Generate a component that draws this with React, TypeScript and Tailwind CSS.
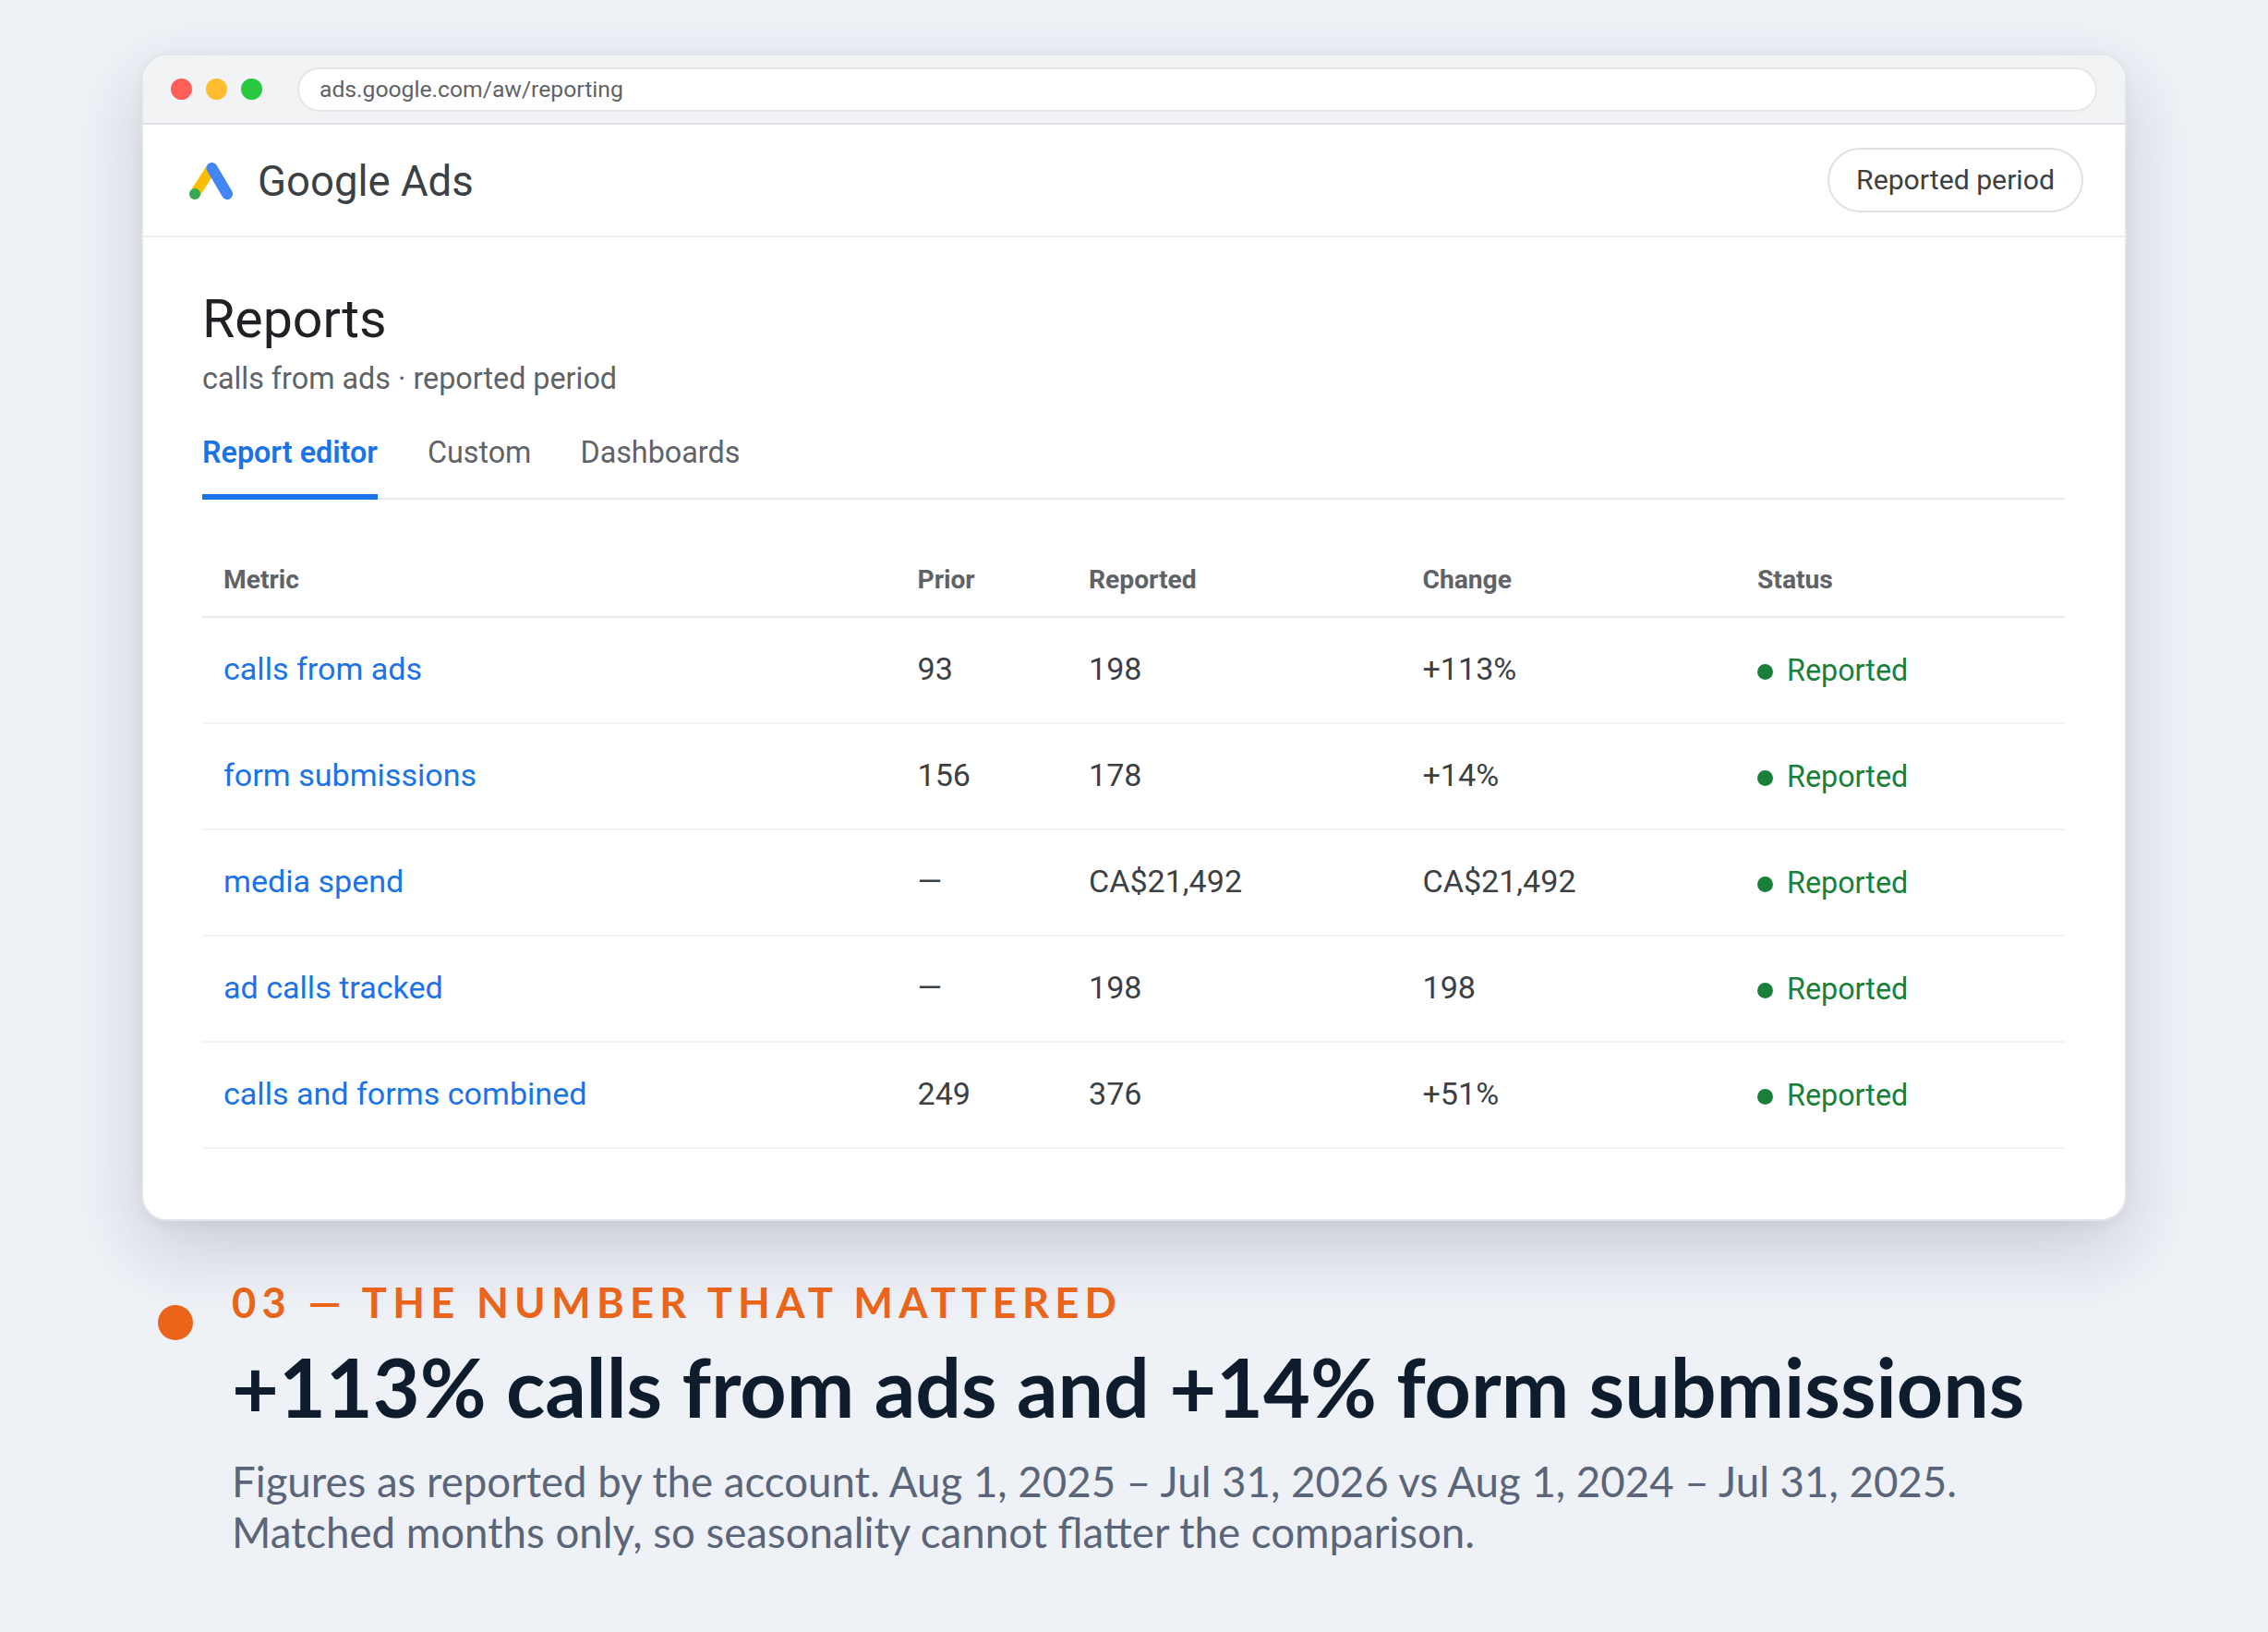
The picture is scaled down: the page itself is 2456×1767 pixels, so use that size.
import React from "react";

const rows = [
  ["calls from ads", "93", "198", "+113%"],
  ["form submissions", "156", "178", "+14%"],
  ["media spend", "—", "CA$21,492", "CA$21,492"],
  ["ad calls tracked", "—", "198", "198"],
  ["calls and forms combined", "249", "376", "+51%"],
];

const grid = "grid grid-cols-[751.5px_185.5px_361.5px_362.5px_357px]";

export default function App() {
  return (
    <div className="w-[2456px] h-[1767px] overflow-hidden bg-[#eef1f6] pt-[58px] pl-[153px] font-['Roboto',sans-serif]">
      <div className="w-[2150px] h-[1264px] rounded-[28px] bg-white overflow-hidden border-2 border-[#e2e5ea] shadow-[0_31px_78px_rgba(30,45,80,0.18),0_4px_14px_rgba(30,45,80,0.05)] flex flex-col">
        <div className="h-[75px] shrink-0 bg-[#f1f3f4] border-b-2 border-[#dfe1e5] flex items-center pl-[30px] pr-[30px]">
          <div className="flex gap-[15px]">
            <span className="w-[23px] h-[23px] rounded-full bg-[#ff5f57]" />
            <span className="w-[23px] h-[23px] rounded-full bg-[#febc2e]" />
            <span className="w-[23px] h-[23px] rounded-full bg-[#28c840]" />
          </div>
          <div className="ml-[38px] flex-1 h-[48px] rounded-full bg-white border-2 border-[#e4e6ea] flex items-center pl-[22px] text-[24.7px] text-[#5f6368]">
            ads.google.com/aw/reporting
          </div>
        </div>
        <div className="h-[122px] shrink-0 border-b-2 border-[#eceef1] flex items-center justify-between pl-[47px] pr-[45px]">
          <div className="flex items-center gap-[25px]">
            <svg width="52" height="44" viewBox="0 0 52 44" className="mt-[2px]">
              <line x1="9" y1="36" x2="27" y2="8" stroke="#fbbc04" strokeWidth="11.5" strokeLinecap="round" />
              <line x1="27.5" y1="8" x2="44" y2="36" stroke="#4285f4" strokeWidth="12" strokeLinecap="round" />
              <circle cx="9" cy="36" r="6" fill="#34a853" />
            </svg>
            <span className="text-[45.5px] leading-none text-[#3c4043] mt-[4px]">Google Ads</span>
          </div>
          <div className="w-[277px] h-[70px] rounded-full border-2 border-[#dfe1e5] bg-white flex items-center justify-center text-[30.2px] text-[#3c4043]">
            Reported period
          </div>
        </div>
        <div className="pt-[56px] pl-[64px] pr-[65px] flex-1 flex flex-col">
          <h1 className="text-[57.3px] leading-[66px] text-[#202124]">Reports</h1>
          <p className="mt-[9px] text-[32.3px] leading-[44px] text-[#5f6368]">calls from ads · reported period</p>
          <div className="mt-[36px] flex gap-[54px] border-b-2 border-[#e8eaed] h-[73px] text-[32.3px] text-[#5f6368]">
            <span className="h-[73px] border-b-[6px] border-[#1a73e8] text-[#1a73e8] leading-[44px] font-semibold">Report editor</span>
            <span className="leading-[44px]">Custom</span>
            <span className="-ml-[1px] leading-[44px]">Dashboards</span>
          </div>
          <div className="mt-[41px] flex flex-col">
            <div className={`${grid} h-[87px] pt-[7px] border-b-2 border-[#e8eaed] items-center text-[28.2px] font-bold text-[#5f6368] [&>span]:pl-[23px]`}>
              <span>Metric</span>
              <span>Prior</span>
              <span>Reported</span>
              <span>Change</span>
              <span>Status</span>
            </div>
            {rows.map((r) => (
              <div key={r[0]} className={`${grid} h-[115px] pb-[2px] border-b-2 border-[#f1f3f4] items-center text-[34.1px] text-[#3c4043] [&>span]:pl-[23px]`}>
                <span className="text-[#1a73e8]">{r[0]}</span>
                <span>{r[1]}</span>
                <span>{r[2]}</span>
                <span>{r[3]}</span>
                <span className="flex items-center gap-[15px] text-[32.3px] text-[#188038] mt-[3px]">
                  <i className="w-[17px] h-[17px] rounded-full bg-[#188038] mt-[2px]" />
                  <span>Reported</span>
                </span>
              </div>
            ))}
          </div>
        </div>
      </div>
      <div className="relative mt-[60px] pl-[98px] font-['Lato',sans-serif]">
        <span className="absolute left-[18px] top-[31px] w-[38px] h-[38px] rounded-full bg-[#ea6419]" />
        <div className="text-[45.2px] leading-[56px] font-bold tracking-[0.14em] text-[#ea6419]">03 — THE NUMBER THAT MATTERED</div>
        <h2 className="mt-[11px] text-[87.8px] leading-[104px] font-bold text-[#0f1c2e] whitespace-nowrap">+113% calls from ads and +14% form submissions</h2>
        <p className="mt-[23px] text-[45.6px] leading-[55px] text-[#5b6579] whitespace-nowrap">
          Figures as reported by the account. Aug 1, 2025 – Jul 31, 2026 vs Aug 1, 2024 – Jul 31, 2025.<br />
          Matched months only, so seasonality cannot flatter the comparison.
        </p>
      </div>
    </div>
  );
}
